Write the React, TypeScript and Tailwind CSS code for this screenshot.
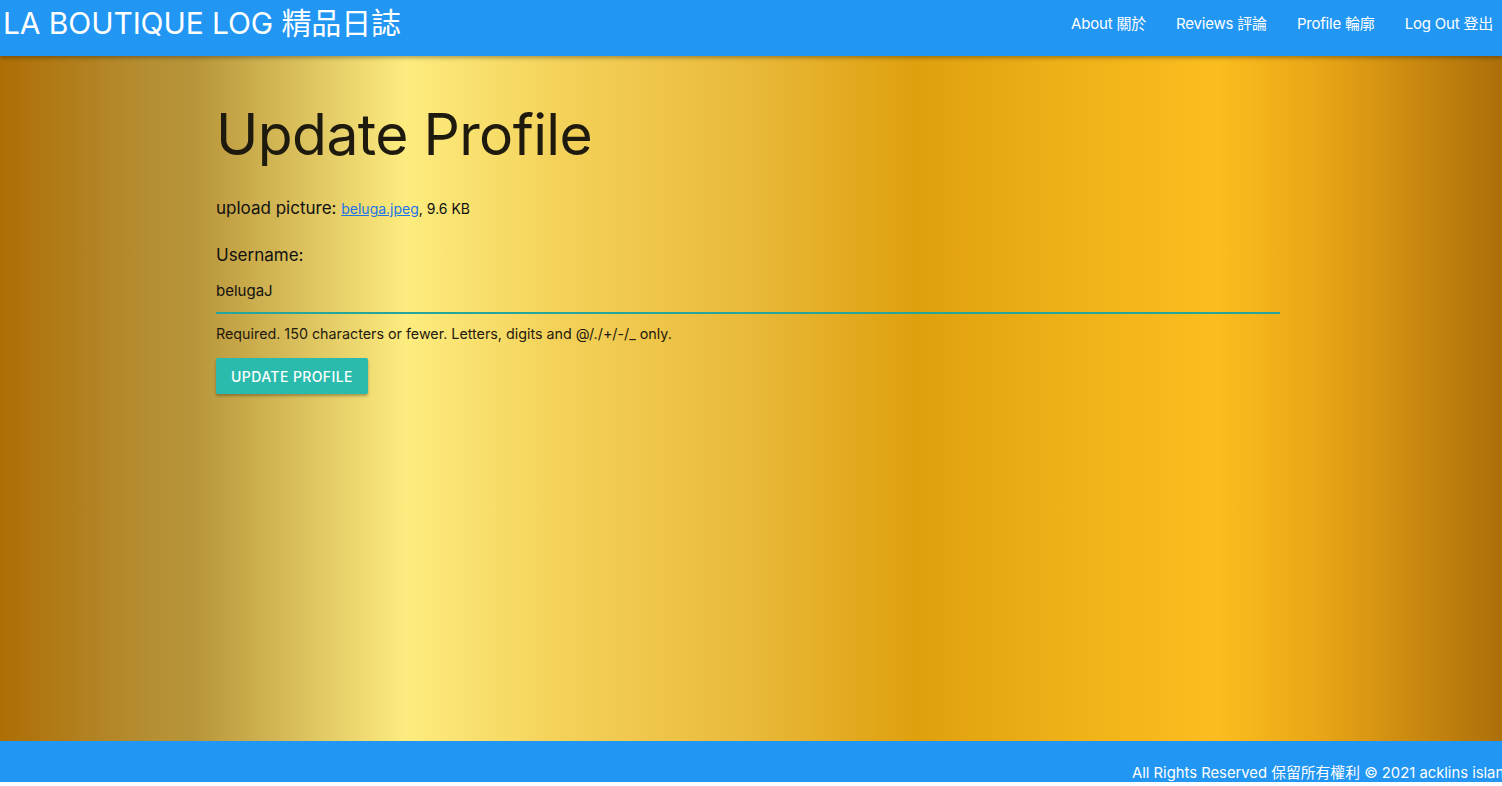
import React from "react"

const font = { fontFamily: "Inter, 'Noto Sans CJK TC', sans-serif" }

export default function App() {
  return (
    <div className="w-[1502px] h-[786px] overflow-hidden bg-white" style={font}>
      <nav className="relative z-10 h-[56px] bg-[#2196f3] flex items-start justify-between text-white shadow-[0_2px_4px_rgba(0,0,0,0.3)]">
        <a className="pl-[3px] text-[30px] leading-[46px] tracking-[-0.1px]">LA BOUTIQUE LOG 精品日誌</a>
        <ul className="flex text-[15px] leading-[47px] tracking-[-0.2px]">
          <li className="px-[15px]">About 關於</li>
          <li className="px-[15px]">Reviews 評論</li>
          <li className="px-[15px]">Profile 輪廓</li>
          <li className="pl-[15px] pr-[9px]">Log Out 登出</li>
        </ul>
      </nav>

      <main className="h-[685px] bg-[linear-gradient(to_right,#ae6e05_0%,#b58f34_10%,#b8953a_13%,#fdec7f_27%,#f4d25a_37%,#e9b93a_50%,#dfa00e_61%,#eeb118_71%,#fbbd1f_81%,#e9a516_88%,#ac6f0a_100%)]">
        <div className="ml-[216px] w-[1064px] pt-[42px]">
          <h1 className="text-[57px] leading-[74px] text-[#1e1a0d] tracking-[-0.6px]">Update Profile</h1>
          <p className="mt-[23px] text-[17px] leading-[26px] text-[#111]">
            upload picture:{" "}
            <a className="text-[14px] text-[#1a73e8] underline">beluga.jpeg</a>
            <span className="text-[14px]">, 9.6 KB</span>
          </p>
          <label className="block mt-[20px] text-[17px] leading-[26px] text-[#111]">Username:</label>
          <div className="mt-[11px] h-[24px] text-[15px] leading-[24px] text-[#111]">belugaJ</div>
          <div className="mt-[9px] h-[2px] bg-[#26a69a]" />
          <p className="mt-[11px] text-[14.3px] leading-[18px] text-[#1e1a0d]">
            Required. 150 characters or fewer. Letters, digits and @/./+/-/_ only.
          </p>
          <button className="mt-[15px] h-[36px] w-[152px] bg-[#2bbbad] text-white text-[14px] font-medium tracking-[0.4px] rounded-[2px] shadow-[0_2px_3px_rgba(0,0,0,0.3)]">
            UPDATE PROFILE
          </button>
        </div>
      </main>

      <footer className="h-[41px] bg-[#2196f3] text-white flex items-end">
        <div className="ml-[1132px] whitespace-nowrap text-[14.8px] leading-[18px]">
          All Rights Reserved 保留所有權利 © 2021 acklins island
        </div>
      </footer>
    </div>
  )
}
